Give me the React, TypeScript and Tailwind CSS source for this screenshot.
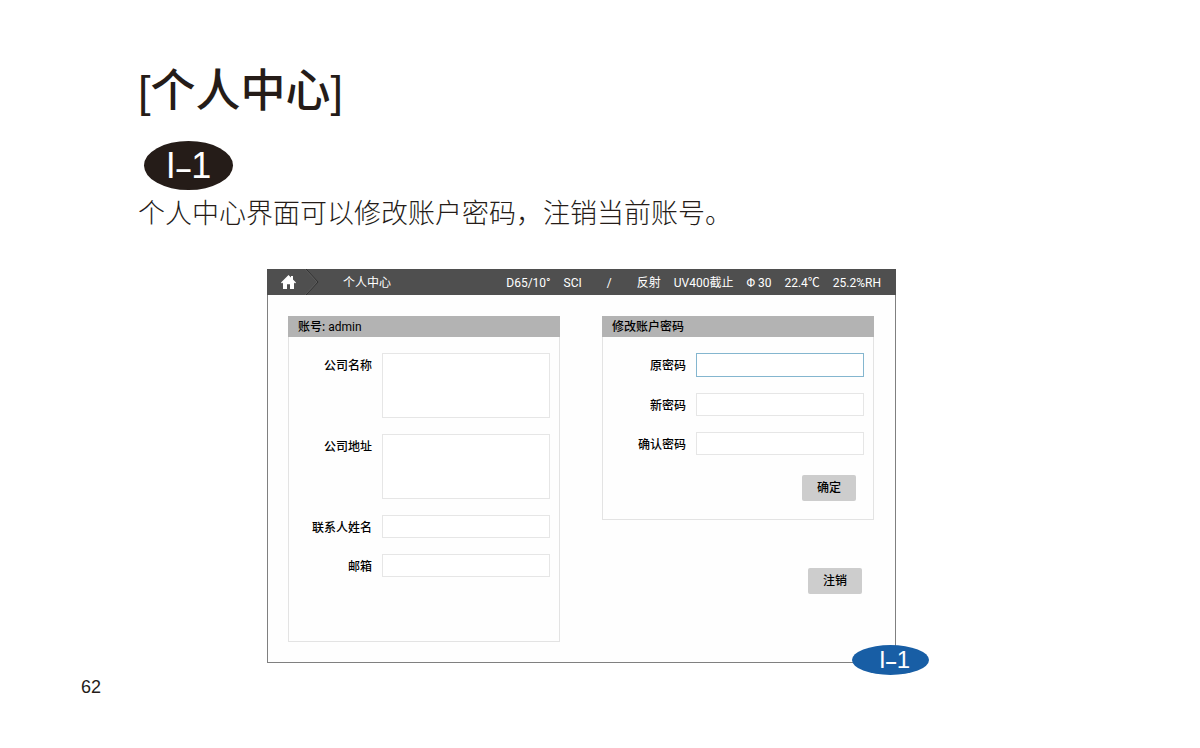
import type { ReactNode } from 'react'

const STATUS = ['反射', 'UV400截止', 'Φ 30', '22.4℃', '25.2%RH']

const inputStyle = 'block w-[168px] border bg-white px-1 outline-none'

function Panel({ title, className = '', children }: { title: ReactNode; className?: string; children: ReactNode }) {
  return (
    <section className={`border border-[#e3e3e3] ${className}`}>
      <h2 className="-mx-px -mt-px h-[21px] bg-[#b3b3b3] px-[10px] text-[12px] leading-[23px] font-medium">{title}</h2>
      <div className="flex flex-col gap-4 px-[9px] pt-4">{children}</div>
    </section>
  )
}

function Field({ id, label, type = 'text', active = false }: { id: string; label: string; type?: string; active?: boolean }) {
  return (
    <div className="flex items-start justify-end gap-[10px]">
      <label htmlFor={id} className="h-[23px] text-[12px] leading-[26px] font-medium">{label}</label>
      {type === 'area' ? (
        <textarea id={id} className={`${inputStyle} h-[65px] resize-none border-[#e6e6e6]`} />
      ) : (
        <input id={id} type={type} className={`${inputStyle} ${active ? 'h-6 border-[#84b6cf]' : 'h-[23px] border-[#e6e6e6]'}`} />
      )}
    </div>
  )
}

function GrayButton({ children }: { children: ReactNode }) {
  return (
    <button type="button" className="h-[26px] w-[54px] rounded-xs bg-[#cdcdcd] text-[12px] leading-[26px] font-medium">
      {children}
    </button>
  )
}

export default function App() {
  return (
    <main className="min-h-screen bg-white px-[81px] pt-[65px] font-['Liberation_Sans','Noto_Sans_CJK_SC',sans-serif] text-[#251c18]">
      <article className="pl-[57px]">
        <h1 className="text-[45px] leading-[54px] font-medium">[个人中心]</h1>
        <div className="mt-[22px] ml-[6px] flex h-[49px] w-[89px] items-center justify-center rounded-[50%] bg-[#251c18] text-white">
          <span className="text-[36px] leading-none">I<span className="text-[28px] font-bold">–</span>1</span>
        </div>
        <p className="mt-1 font-['Noto_Sans_CJK_SC',sans-serif] text-[27px] leading-9 font-light">
          个人中心界面可以修改账户密码，注销当前账号。
        </p>

        {/* Device screen */}
        <div className="relative mt-[39px] ml-[129px] max-w-[629px] border border-[#808080] bg-[#fefefe] font-[Roboto,'Noto_Sans_CJK_SC',sans-serif] text-black">
          <header className="-mx-px -mt-px flex h-[26px] items-center bg-[#4f4f4f] pr-[15px] text-[12px] leading-5 text-white">
            <a href="#home" aria-label="主页" className="ml-[14px]">
              <svg width="15" height="14" viewBox="0 0 15 14" fill="currentColor">
                <path d="M7.5 0 10 2.5V1h2v3.5L15 7.5 14 8.4 13 7.6V14H9V9.2H6V14H2V7.6L1 8.4 0 7.5Z" />
              </svg>
            </a>
            <svg width="14" height="26" viewBox="0 0 14 26" fill="none" className="ml-[9px]">
              <path d="M1 0 13 13 1 26" stroke="#2f2f2f" />
              <path d="M0 0 12 13 0 26" stroke="#5c5c5c" />
            </svg>
            <span className="ml-6 pt-px">个人中心</span>
            <div className="ml-auto flex gap-[13px] pt-px whitespace-nowrap">
              <span>D65/10°</span>
              <span>SCI</span>
              <span className="px-3">/</span>
              {STATUS.map((item) => (
                <span key={item}>{item}</span>
              ))}
            </div>
          </header>

          <div className="grid grid-cols-2 items-start gap-[42px] pt-[21px] pr-[21px] pb-5 pl-5">
            <Panel title={<>账号: <span className="font-normal">admin</span></>} className="h-[326px]">
              <Field id="company" label="公司名称" type="area" />
              <Field id="address" label="公司地址" type="area" />
              <Field id="contact" label="联系人姓名" />
              <Field id="email" label="邮箱" type="email" />
            </Panel>

            <div>
              <Panel title="修改账户密码" className="pb-[18px]">
                <Field id="old-password" label="原密码" type="password" active />
                <Field id="new-password" label="新密码" type="password" />
                <Field id="confirm-password" label="确认密码" type="password" />
                <div className="flex justify-end pt-1 pr-2">
                  <GrayButton>确定</GrayButton>
                </div>
              </Panel>
              <div className="mt-12 flex justify-end pr-3">
                <GrayButton>注销</GrayButton>
              </div>
            </div>
          </div>

          <div className="absolute -right-[34px] -bottom-[13px] flex h-[30px] w-[77px] items-center justify-center rounded-[50%] bg-[#185ea5] pl-2 font-['Liberation_Sans',sans-serif] text-white">
            <span className="text-[24px] leading-none">I<span className="text-[20px] font-bold">–</span>1</span>
          </div>
        </div>
      </article>
      <footer className="mt-3 text-[18px] leading-6">62</footer>
    </main>
  )
}
